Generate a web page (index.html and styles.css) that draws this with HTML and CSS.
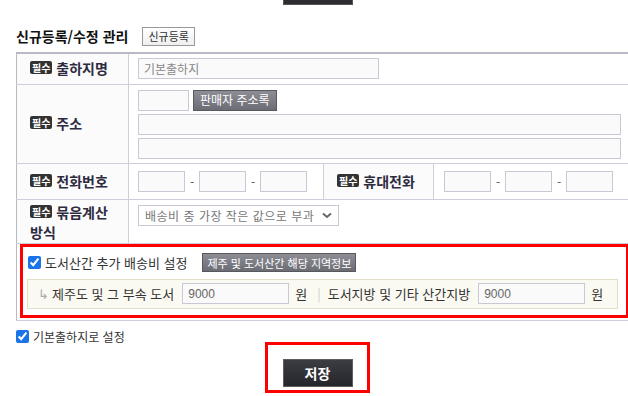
FILE: index.html
```html
<!DOCTYPE html>
<html lang="ko">
<head>
  <meta charset="UTF-8" />
  <title>출하지 관리</title>
  <link rel="stylesheet" href="styles.css">
</head>
<body>
  <div class="topbar"><span class="topbtn"></span></div>

  <div class="page">
    <div class="head">
      <h3>신규등록/수정 관리</h3>
      <button class="btn-line">신규등록</button>
    </div>

    <table class="form">
      <colgroup>
        <col class="c-th"><col class="c-td"><col class="c-th2"><col>
      </colgroup>
      <tr class="r1">
        <th><span class="req">필수</span> 출하지명</th>
        <td colspan="3"><input class="in w240" placeholder="기본출하지"></td>
      </tr>
      <tr class="r2">
        <th><span class="req">필수</span> 주소</th>
        <td colspan="3">
          <div class="addr-top">
            <input class="in w50">
            <button class="btn-gray">판매자 주소록</button>
          </div>
          <input class="in wfull">
          <input class="in wfull">
        </td>
      </tr>
      <tr class="r3">
        <th><span class="req">필수</span> 전화번호</th>
        <td>
          <div class="phone">
            <input class="in w47"><span class="dash">-</span><input class="in w47"><span class="dash">-</span><input class="in w47">
          </div>
        </td>
        <th class="th2"><span class="req">필수</span> 휴대전화</th>
        <td class="td2">
          <div class="phone">
            <input class="in w47"><span class="dash">-</span><input class="in w47"><span class="dash">-</span><input class="in w47">
          </div>
        </td>
      </tr>
      <tr class="r4">
        <th><span class="req">필수</span> 묶음계산 방식</th>
        <td colspan="3">
          <div class="select">
            <span>배송비 중 가장 작은 값으로 부과</span>
            <svg width="10" height="7" viewBox="0 0 10 7"><path d="M1 1.5 L5 5 L9 1.5" fill="none" stroke="#666" stroke-width="2"/></svg>
          </div>
        </td>
      </tr>
      <tr class="r5">
        <td colspan="4">
          <div class="mark island">
            <div class="island-top">
              <label class="chk"><input type="checkbox" checked> 도서산간 추가 배송비 설정</label>
              <button class="btn-gray small">제주 및 도서산간 해당 지역정보</button>
            </div>
            <div class="island-box">
              <span class="arrow">↳</span>
              <span>제주도 및 그 부속 도서</span>
              <input class="in w106" value="9000">
              <span class="won">원</span>
              <span class="bar">|</span>
              <span>도서지방 및 기타 산간지방</span>
              <input class="in w106" value="9000">
              <span class="won">원</span>
            </div>
          </div>
        </td>
      </tr>
    </table>

    <label class="chk default"><input type="checkbox" checked> 기본출하지로 설정</label>

    <div class="save-wrap">
      <div class="mark save-mark">
        <button class="btn-save">저장</button>
      </div>
    </div>
  </div>
</body>
</html>
```

FILE: styles.css
```css
html, body {
  margin: 0;
  overflow: hidden;
}
body {
  width: 628px;
  height: 396px;
  font-family: "Noto Sans CJK KR", "Noto Sans", sans-serif;
  font-size: 12px;
  color: #333;
  background: #fff;
}
.topbar {
  height: 5px;
  padding-left: 283px;
}
.topbtn {
  display: block;
  width: 68px;
  height: 4px;
  background: #2c2d31;
  border: 1px solid #555;
  border-top: 0;
}
.page {
  padding: 0 0 0 16px;
}
.head {
  display: flex;
  align-items: center;
  height: 18px;
  margin-top: 22px;
}
.head h3 {
  margin: 0;
  font-size: 14px;
  font-weight: bold;
  color: #111;
}
.btn-line {
  margin-left: 14px;
  height: 19px;
  padding: 0 5px;
  font-family: inherit;
  font-size: 11px;
  color: #333;
  background: linear-gradient(#fff, #efefef);
  border: 1px solid #999;
  line-height: 16px;
}

.form {
  border-collapse: collapse;
  table-layout: fixed;
  width: 640px;
  margin-top: 7px;
  border-top: 2px solid #b9b9c6;
  border-left: 1px solid #b9b9c6;
  border-bottom: 1px solid #b9b9c6;
}
.c-th { width: 112px; }
.c-td { width: 195px; }
.c-th2 { width: 110px; }
.form th, .form td {
  border-bottom: 1px solid #cfcfda;
  padding: 0 0 0 9px;
}
.form th {
  text-align: left;
  padding-left: 13px;
  padding-right: 12px;
  font-size: 14px;
  font-weight: bold;
  color: #2e2b40;
  background: #fbfbfc;
  border-right: 1px solid #cfcfda;
  line-height: 19px;
}
.form th.th2 {
  padding-left: 13px;
  border-left: 1px solid #cfcfda;
}
.form td.td2 { padding-left: 10px; }
.req {
  display: inline-block;
  padding: 0 2px;
  height: 13px;
  line-height: 13px;
  font-size: 10px;
  font-weight: bold;
  color: #fff;
  background: #333;
  border-radius: 2px;
  vertical-align: 2px;
}
.r1 { height: 31px; }
.r2 td { padding-top: 5px; padding-bottom: 1px; }
.r3 { height: 36px; }
.r4 { height: 44px; }
.r4 th { line-height: 20px; padding-top: 2px; }
.r4 td { vertical-align: top; padding-top: 5px; }

.in {
  box-sizing: border-box;
  height: 21px;
  padding: 0 5px;
  font-family: inherit;
  font-size: 12px;
  color: #555;
  background: #fafafa;
  border: 1px solid #c9c9d6;
  outline: none;
}
.in::placeholder { color: #888; }
.w240 { width: 241px; }
.w50 { width: 51px; }
.w47 { width: 47px; }
.w106 { width: 107px; font-family: "Liberation Sans", sans-serif; color: #666; }
.wfull { display: block; width: 483px; margin-bottom: 3px; }

.addr-top {
  display: flex;
  gap: 4px;
  margin-bottom: 3px;
}
.btn-gray {
  height: 21px;
  padding: 0 6px;
  font-family: inherit;
  font-size: 12px;
  color: #fff;
  background: linear-gradient(#8d8d95, #6c6c75);
  border: 1px solid #58585f;
  line-height: 18px;
}
.btn-gray.small {
  height: 19px;
  font-size: 11px;
  padding: 0 4px;
  margin-left: 15px;
  line-height: 16px;
}

.phone {
  display: flex;
  align-items: center;
}
.dash {
  width: 14px;
  text-align: center;
  color: #555;
}

.select {
  box-sizing: border-box;
  width: 201px;
  height: 21px;
  display: flex;
  align-items: center;
  justify-content: space-between;
  padding: 0 6px 0 6px;
  font-size: 12px;
  letter-spacing: 0.5px;
  color: #777;
  background: #fff;
  border: 1px solid #c9c9d6;
}

.r5 td { padding: 0 0 2px 3px; }
.mark {
  border: 3px solid #f00;
}
.island {
  width: 597px;
  padding: 3px 2px 6px 4px;
}
.island-top {
  display: flex;
  align-items: center;
  height: 26px;
  margin-bottom: 3px;
}
.chk {
  display: flex;
  align-items: center;
  font-size: 13px;
  color: #333;
}
.chk input {
  width: 13px;
  height: 13px;
  margin: 0 4px 0 1px;
  accent-color: #1a73e8;
}
.island-box {
  box-sizing: border-box;
  width: 591px;
  height: 30px;
  display: flex;
  align-items: center;
  padding-left: 10px;
  background: #fbfaf2;
  border: 1px solid #e2dfc6;
  font-size: 13px;
}
.arrow { color: #aaa; margin-right: 3px; }
.island-box .in { margin-left: 8px; }
.won { margin-left: 6px; }
.bar { color: #ccc; margin: 0 7px 0 10px; }

.default {
  height: 15px;
  margin-top: 8px;
  font-size: 12px;
}
.default input { margin-left: 0; }

.save-wrap {
  display: flex;
  padding-left: 249px;
  margin-top: -2px;
}
.save-mark {
  box-sizing: border-box;
  width: 105px;
  height: 51px;
  display: flex;
  justify-content: center;
  padding-top: 14px;
}
.btn-save {
  width: 70px;
  height: 28px;
  font-family: inherit;
  font-size: 14px;
  font-weight: bold;
  color: #fff;
  background: linear-gradient(#3c3d44, #25262b);
  border: 1px solid #5c5d63;
}
```
